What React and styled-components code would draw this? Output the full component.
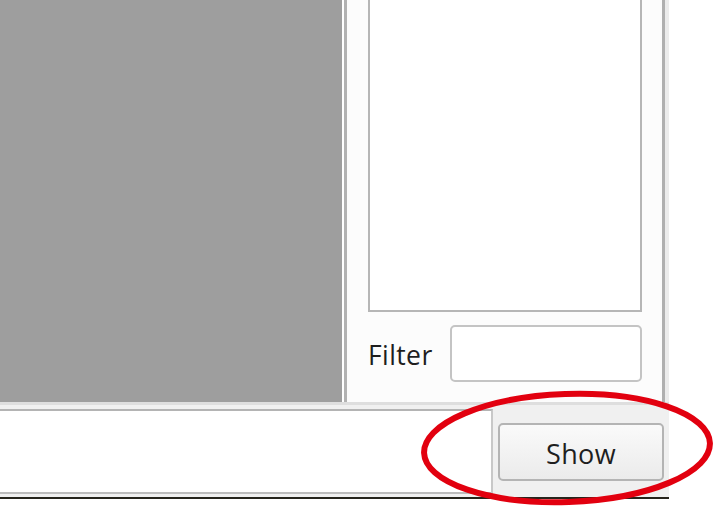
import React from 'react';
import styled, { createGlobalStyle } from 'styled-components';

const Global = createGlobalStyle`
  html, body {
    margin: 0;
    padding: 0;
    background: #ffffff;
  }
  body {
    font-family: "Open Sans", "Noto Sans", sans-serif;
  }
`;

const Page = styled.div`
  position: relative;
  width: 714px;
  height: 506px;
  overflow: hidden;
  background: #ffffff;
`;

const Window = styled.div`
  width: 669px;
  display: flex;
  flex-direction: column;
`;

const Top = styled.div`
  display: flex;
  height: 402px;
`;

const Canvas = styled.div`
  width: 342px;
  background: #9e9e9e;
`;

const Splitter = styled.div`
  width: 2px;
  background: #ffffff;
  border-right: 3px solid #b2b2b2;
`;

const Side = styled.div`
  flex: 1;
  display: flex;
  flex-direction: column;
  background: #fcfcfc;
  padding: 0 20px 20px 21px;
  border-right: 3px solid #b0b0b0;
  box-shadow: 4px 0 0 #ececec;
  margin-right: 4px;
`;

const ListBox = styled.div`
  height: 310px;
  background: #ffffff;
  border: 2px solid #b6b6b6;
  border-top: none;
`;

const FilterRow = styled.div`
  display: flex;
  align-items: center;
  margin-top: 13px;
  gap: 17px;
`;

const Label = styled.span`
  font-size: 26.5px;
  color: #1e1e1e;
  letter-spacing: 0.4px;
  padding-top: 3px;
`;

const Input = styled.div`
  flex: 1;
  height: 53px;
  background: #ffffff;
  border: 2px solid #c4c4c4;
  border-radius: 5px;
`;

const Bottom = styled.div`
  box-sizing: border-box;
  display: flex;
  height: 95px;
  background: #f0f0f0;
  border-top: 3px solid #dedede;
  padding-top: 4px;
  border-bottom: 3px solid #f0f0f0;
  box-shadow: 0 2px 0 #26241c;
`;

const TextArea = styled.div`
  box-sizing: border-box;
  width: 493px;
  height: 85px;
  background: #ffffff;
  border-top: 2px solid #b4b4b4;
  border-right: 2px solid #c8c8c8;
  border-bottom: 2px solid #bcbcbc;
`;

const Button = styled.div`
  box-sizing: border-box;
  margin: 14px 0 0 5px;
  width: 166px;
  height: 58px;
  display: flex;
  align-items: center;
  justify-content: center;
  border: 2px solid #b4b4b4;
  border-radius: 5px;
  background: linear-gradient(#fafafa, #ebebeb);
  font-size: 27px;
  color: #1e1e1e;
  letter-spacing: 0.4px;
  padding-top: 3px;
`;

const Ring = styled.svg`
  position: absolute;
  left: 0;
  top: 0;
  pointer-events: none;
`;

export default function App() {
  return (
    <Page>
      <Global />
      <Window>
        <Top>
          <Canvas />
          <Splitter />
          <Side>
            <ListBox />
            <FilterRow>
              <Label>Filter</Label>
              <Input />
            </FilterRow>
          </Side>
        </Top>
        <Bottom>
          <TextArea />
          <Button>Show</Button>
        </Bottom>
      </Window>
      <Ring width="714" height="506" viewBox="0 0 714 506">
        <ellipse
          cx="567"
          cy="448"
          rx="143"
          ry="54"
          fill="none"
          stroke="#e2000f"
          strokeWidth="6"
          transform="rotate(-2 567 448)"
        />
      </Ring>
    </Page>
  );
}
